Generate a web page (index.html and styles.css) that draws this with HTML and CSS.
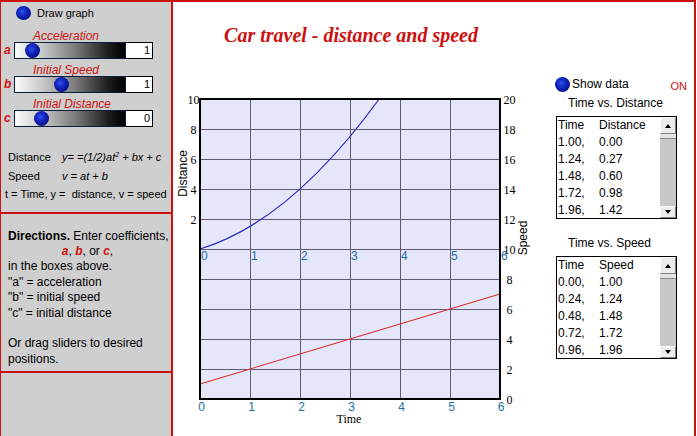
FILE: index.html
```html
<!DOCTYPE html>
<html>
<head>
<meta charset="utf-8">
<link rel="stylesheet" href="styles.css">
</head>
<body>
<div class="app">
  <aside class="left">
    <section class="controls">
      <div class="draw"><span class="knob"></span><span class="draw-text">Draw graph</span></div>
      <div class="group">
        <div class="glabel">Acceleration</div>
        <div class="srow"><span class="letter">a</span><div class="track"><span class="knob slide" style="left:10px"></span></div><div class="num">1</div></div>
      </div>
      <div class="group">
        <div class="glabel">Initial Speed</div>
        <div class="srow"><span class="letter">b</span><div class="track"><span class="knob slide" style="left:39px"></span></div><div class="num">1</div></div>
      </div>
      <div class="group">
        <div class="glabel">Initial Distance</div>
        <div class="srow"><span class="letter">c</span><div class="track"><span class="knob slide" style="left:19px"></span></div><div class="num">0</div></div>
      </div>
      <div class="formula first"><span class="fname">Distance</span><i>y= =(1/2)at<sup>2</sup> + bx + c</i></div>
      <div class="formula"><span class="fname">Speed</span><i>v = at + b</i></div>
      <div class="legend">t = Time, y = &nbsp;distance, v = speed</div>
    </section>
    <section class="directions">
      <p><b>Directions.</b> Enter coefficients,</p>
      <p class="centered"><b class="red">a</b>, <b class="red">b</b>, or <b class="red">c</b>,</p>
      <p>in the boxes above.</p>
      <p>"a" = acceleration</p>
      <p>"b" = initial speed</p>
      <p>"c" = initial distance</p>
      <p>&nbsp;</p>
      <p>Or drag sliders to desired</p>
      <p>positions.</p>
    </section>
    <section class="blank"></section>
  </aside>

  <main class="center">
    <h1 class="title">Car travel - distance and speed</h1>
    <svg class="graph" width="372" height="346" viewBox="173 88 372 346" xmlns="http://www.w3.org/2000/svg">
      <rect x="200" y="99" width="300" height="300" fill="#e6e6fa"/>
      <g stroke="#5e5a78" stroke-width="1" shape-rendering="crispEdges">
        <line x1="250.5" y1="99" x2="250.5" y2="399"/>
        <line x1="300.5" y1="99" x2="300.5" y2="399"/>
        <line x1="350.5" y1="99" x2="350.5" y2="399"/>
        <line x1="400.5" y1="99" x2="400.5" y2="399"/>
        <line x1="450.5" y1="99" x2="450.5" y2="399"/>
        <line x1="200" y1="129.5" x2="500" y2="129.5"/>
        <line x1="200" y1="159.5" x2="500" y2="159.5"/>
        <line x1="200" y1="189.5" x2="500" y2="189.5"/>
        <line x1="200" y1="219.5" x2="500" y2="219.5"/>
        <line x1="200" y1="249.5" x2="500" y2="249.5"/>
        <line x1="200" y1="279.5" x2="500" y2="279.5"/>
        <line x1="200" y1="309.5" x2="500" y2="309.5"/>
        <line x1="200" y1="339.5" x2="500" y2="339.5"/>
        <line x1="200" y1="369.5" x2="500" y2="369.5"/>
      </g>
      <path d="M200 249 Q289.6 222.1 379.2 99" fill="none" stroke="#2424c0" stroke-width="1.2"/>
      <line x1="200" y1="384" x2="500" y2="294" stroke="#e02828" stroke-width="1.1"/>
      <rect x="200" y="99" width="300" height="300" fill="none" stroke="#000" stroke-width="2"/>

      <g class="serif" text-anchor="middle">
        <text x="193.5" y="104">10</text>
        <text x="193.5" y="134">8</text>
        <text x="193.5" y="164">6</text>
        <text x="193.5" y="194">4</text>
        <text x="193.5" y="224">2</text>
        <text x="509.5" y="103.5">20</text>
        <text x="509.5" y="133.5">18</text>
        <text x="509.5" y="163.5">16</text>
        <text x="509.5" y="193.5">14</text>
        <text x="509.5" y="223.5">12</text>
        <text x="509.5" y="253.5">10</text>
        <text x="509.5" y="283.5">8</text>
        <text x="509.5" y="313.5">6</text>
        <text x="509.5" y="343.5">4</text>
        <text x="509.5" y="373.5">2</text>
        <text x="509.5" y="403.5">0</text>
        <text x="349" y="423">Time</text>
      </g>
      <g class="teal">
        <text x="201" y="260">0</text>
        <text x="251" y="260">1</text>
        <text x="301" y="260">2</text>
        <text x="351" y="260">3</text>
        <text x="401" y="260">4</text>
        <text x="451" y="260">5</text>
        <text x="501" y="260">6</text>
      </g>
      <g class="teal" text-anchor="middle">
        <text x="201.5" y="411">0</text>
        <text x="251.5" y="411">1</text>
        <text x="301.5" y="411">2</text>
        <text x="351.5" y="411">3</text>
        <text x="401.5" y="411">4</text>
        <text x="451.5" y="411">5</text>
        <text x="501" y="411">6</text>
      </g>
      <text class="axis" text-anchor="middle" transform="translate(187 173.5) rotate(-90)">Distance</text>
      <text class="axis" text-anchor="middle" transform="translate(527 238) rotate(-90)">Speed</text>
    </svg>
  </main>

  <aside class="right">
    <div class="show"><span class="knob"></span><span class="show-text">Show data</span><span class="on">ON</span></div>
    <div class="caption">Time vs. Distance</div>
    <div class="listbox">
      <div class="rows">
        <div class="row"><span class="c1">Time</span><span>Distance</span></div>
        <div class="row"><span class="c1">1.00,</span><span>0.00</span></div>
        <div class="row"><span class="c1">1.24,</span><span>0.27</span></div>
        <div class="row"><span class="c1">1.48,</span><span>0.60</span></div>
        <div class="row"><span class="c1">1.72,</span><span>0.98</span></div>
        <div class="row"><span class="c1">1.96,</span><span>1.42</span></div>
      </div>
      <div class="sb">
        <div class="sb-btn"><span class="tri-up"></span></div>
        <div class="sb-thumb"></div>
        <div class="sb-track"></div>
        <div class="sb-btn down"><span class="tri-down"></span></div>
      </div>
    </div>
    <div class="caption second">Time vs. Speed</div>
    <div class="listbox">
      <div class="rows">
        <div class="row"><span class="c1">Time</span><span>Speed</span></div>
        <div class="row"><span class="c1">0.00,</span><span>1.00</span></div>
        <div class="row"><span class="c1">0.24,</span><span>1.24</span></div>
        <div class="row"><span class="c1">0.48,</span><span>1.48</span></div>
        <div class="row"><span class="c1">0.72,</span><span>1.72</span></div>
        <div class="row"><span class="c1">0.96,</span><span>1.96</span></div>
      </div>
      <div class="sb">
        <div class="sb-btn"><span class="tri-up"></span></div>
        <div class="sb-thumb"></div>
        <div class="sb-track"></div>
        <div class="sb-btn down"><span class="tri-down"></span></div>
      </div>
    </div>
  </aside>
</div>
</body>
</html>
```

FILE: styles.css
```css
* { box-sizing: border-box; }
html, body { margin: 0; padding: 0; background: #fff; }
body {
  font-family: "Liberation Sans", Arial, sans-serif;
  color: #000;
  width: 697px;
  height: 436px;
  overflow: hidden;
}
.app {
  display: flex;
  width: 696px;
  height: 436px;
  border-top: 2px solid #cc1111;
}

/* ---------- left panel ---------- */
.left {
  width: 173px;
  flex: none;
  background: #cfcfcf;
  border-left: 1px solid #cc1111;
  border-right: 2px solid #cc1111;
  display: flex;
  flex-direction: column;
}
.controls {
  height: 212px;
  border-bottom: 2px solid #cc1111;
  font-size: 11px;
}
.knob {
  display: inline-block;
  width: 15px;
  height: 15px;
  border-radius: 50%;
  background: radial-gradient(circle at 42% 40%, #3050ea 0%, #1228c0 35%, #06108a 70%, #00083a 100%);
  flex: none;
}
.draw {
  margin-top: 4px;
  height: 14px;
  display: flex;
  align-items: center;
  padding-left: 15px;
}
.draw .knob { width: 15px; height: 14px; }
.draw-text { margin-left: 6px; font-size: 11px; }
.group { margin-top: 10px; }
.group + .group { margin-top: 5px; }
.glabel {
  line-height: 12px;
  height: 12px;
  padding-left: 32px;
  color: #cc1111;
  font-style: italic;
  font-size: 12px;
}
.srow {
  display: flex;
  height: 17px;
  align-items: stretch;
}
.letter {
  width: 13px;
  padding-left: 3px;
  color: #cc1111;
  font-weight: bold;
  font-style: italic;
  font-size: 12px;
  line-height: 17px;
}
.track {
  position: relative;
  width: 112px;
  border: 1px solid #0c1c3c;
  background: linear-gradient(to right, #fbfbfb 0%, #c8c8c8 25%, #7a7a7a 55%, #1c1c1c 85%, #000 100%);
}
.slide {
  position: absolute;
  top: 0;
}
.num {
  width: 28px;
  margin-left: -1px;
  border: 1px solid #000;
  background: #fff;
  text-align: right;
  padding-right: 2px;
  font-size: 11px;
  line-height: 15px;
}
.formula {
  display: flex;
  line-height: 19px;
  height: 19px;
  padding-left: 7px;
  font-size: 11px;
}
.formula.first { margin-top: 21px; }
.fname { width: 54px; }
.formula sup { font-size: 7px; line-height: 0; vertical-align: 4px; }
.legend {
  padding-left: 4px;
  line-height: 16px;
  font-size: 11px;
}
.directions {
  height: 159px;
  border-bottom: 2px solid #cc1111;
  padding: 14.5px 0 0 7px;
  font-size: 12px;
  line-height: 15.4px;
}
.directions p { margin: 0; white-space: nowrap; }
.directions .centered { text-align: center; padding-right: 4px; }
.red { color: #cc1111; font-style: italic; }
.blank { flex: 1; }

/* ---------- center ---------- */
.center {
  width: 372px;
  flex: none;
  display: flex;
  flex-direction: column;
}
.title {
  margin: 0;
  height: 86px;
  padding: 21px 16px 0 0;
  text-align: center;
  font-family: "Liberation Serif", "Times New Roman", serif;
  font-size: 20px;
  line-height: 24px;
  font-weight: bold;
  font-style: italic;
  color: #cc1111;
}
.graph { display: block; }
.graph .serif text {
  font-family: "Liberation Serif", "Times New Roman", serif;
  font-size: 12px;
  fill: #000;
}
.graph .teal text {
  font-family: "Liberation Sans", Arial, sans-serif;
  font-size: 12px;
  fill: #1a6fa6;
}
.graph .axis {
  font-family: "Liberation Sans", Arial, sans-serif;
  font-size: 12px;
  fill: #000;
}

/* ---------- right panel ---------- */
.right {
  width: 151px;
  flex: none;
  border-right: 2px solid #cc1111;
  font-size: 12px;
}
.show {
  margin-top: 74px;
  height: 16px;
  display: flex;
  align-items: center;
  padding-left: 10px;
  padding-right: 7px;
}
.show-text { margin-left: 2px; }
.on {
  margin-left: auto;
  margin-top: 3px;
  color: #cc1111;
  font-size: 11px;
}
.caption {
  margin-top: 4px;
  padding-left: 23px;
  line-height: 14px;
  height: 14px;
}
.caption.second { margin-top: 17px; }
.listbox {
  margin: 6px 0 0 11px;
  width: 121px;
  height: 103px;
  border: 1px solid #000;
  background: #fff;
  display: flex;
  overflow: hidden;
}
.rows { flex: 1; padding-left: 1px; }
.row { display: flex; line-height: 17px; height: 17px; }
.c1 { width: 41px; }
.sb {
  width: 16px;
  display: flex;
  flex-direction: column;
  background: #c8c8c8;
}
.sb-btn {
  height: 17px;
  flex: none;
  background: #ececec;
  border: 1px solid;
  border-color: #fff #808080 #808080 #fff;
  display: flex;
  align-items: center;
  justify-content: center;
}
.sb-btn.down { height: 12px; }
.sb-thumb { height: 5px; background: #e4e4e4; border-bottom: 1px solid #8a8a8a; }
.sb-track { flex: 1; }
.tri-up {
  width: 0; height: 0;
  border-left: 3.5px solid transparent;
  border-right: 3.5px solid transparent;
  border-bottom: 4px solid #000;
}
.tri-down {
  width: 0; height: 0;
  border-left: 3.5px solid transparent;
  border-right: 3.5px solid transparent;
  border-top: 4px solid #000;
}
```
